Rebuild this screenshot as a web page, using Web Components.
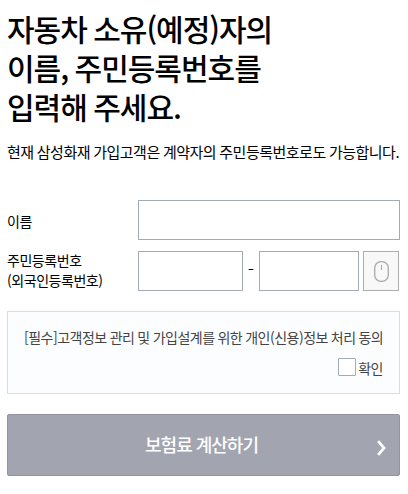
<!DOCTYPE html>
<html lang="ko">
<head>
<meta charset="utf-8">
<title>보험료 계산</title>
<style>
  body {
    margin: 0;
    background: #fff;
    color: #000;
    font-family: 'Noto Sans CJK KR', 'Noto Sans', sans-serif;
  }
</style>
</head>
<body>
<insurance-form>
  <page-title>
    자동차 소유(예정)자의<br>이름, 주민등록번호를<br>입력해 주세요.
    <span slot="note">현재 삼성화재 가입고객은 계약자의 주민등록번호로도 가능합니다.</span>
  </page-title>
  <form-row>
    <span slot="label">이름</span>
    <text-box label="이름"></text-box>
  </form-row>
  <form-row two-line>
    <span slot="label">주민등록번호<br>(외국인등록번호)</span>
    <resident-number></resident-number>
  </form-row>
  <agree-box>
    [필수]고객정보 관리 및 가입설계를 위한 개인(신용)정보 처리 동의
    <span slot="check">확인</span>
  </agree-box>
  <submit-button>보험료 계산하기</submit-button>
</insurance-form>

<script>
(() => {

  const define = (name, html) => {
    customElements.define(name, class extends HTMLElement {
      constructor() {
        super()
        this.attachShadow({ mode: 'open' }).innerHTML = html
      }
    })
  }

  define('insurance-form', `
    <style>
      :host {
        display: flex;
        flex-direction: column;
        box-sizing: border-box;
        width: 408px;
        padding: 9px 8px 18px 7px;
      }
      ::slotted(form-row) { margin-bottom: 11px; }
      ::slotted(agree-box) { margin: 9px 0 20px; }
    </style>
    <slot></slot>
  `)

  define('page-title', `
    <style>
      :host { display: block; height: 191px; white-space: nowrap; }
      h1 {
        margin: 0;
        font-size: 30px;
        font-weight: 500;
        line-height: 39px;
        letter-spacing: -1px;
        word-spacing: -1px;
      }
      p {
        margin: 15px 0 0;
        font-size: 15px;
        font-weight: 400;
        line-height: 22px;
        letter-spacing: -.5px;
        word-spacing: -.5px;
      }
    </style>
    <h1><slot></slot></h1>
    <p><slot name="note"></slot></p>
  `)

  define('form-row', `
    <style>
      :host {
        display: grid;
        grid-template: 40px / 131px 262px;
        align-items: center;
      }
      .label {
        padding-top: 2px;
        font-size: 14px;
        font-weight: 400;
        line-height: 20px;
        letter-spacing: -.45px;
      }
      :host([two-line]) .label { padding: 0 0 2px; }
    </style>
    <div class="label"><slot name="label"></slot></div>
    <slot></slot>
  `)

  class TextBox extends HTMLElement {
    constructor() {
      super()
      this.attachShadow({ mode: 'open' }).innerHTML = `
        <style>
          :host { display: block; }
          input {
            display: block;
            box-sizing: border-box;
            width: 100%;
            height: 40px;
            margin: 0;
            padding: 0 10px;
            border: 1px solid #a3abb5;
            border-radius: 0;
            background: #fff;
            font: 14px 'Noto Sans CJK KR', sans-serif;
            outline: none;
          }
        </style>
        <input>
      `
      const input = this.shadowRoot.querySelector('input')
      input.type = this.getAttribute('type') || 'text'
      input.setAttribute('aria-label', this.getAttribute('label') || '')
    }
  }
  customElements.define('text-box', TextBox)

  define('resident-number', `
    <style>
      :host {
        display: grid;
        grid-template-columns: 105px 16px 100px 36px;
      }
      .dash {
        font-size: 19px;
        font-weight: 300;
        line-height: 36px;
        text-align: center;
      }
      button {
        display: flex;
        align-items: center;
        justify-content: center;
        box-sizing: border-box;
        width: 36px;
        height: 40px;
        margin-left: 4px;
        padding: 0 0 0 1px;
        border: 1px solid #adadad;
        background: #f8f8f8;
      }
    </style>
    <text-box label="앞자리"></text-box>
    <span class="dash">-</span>
    <text-box type="password" label="뒷자리"></text-box>
    <button type="button" aria-label="마우스 입력">
      <svg width="15" height="21" viewBox="0 0 15 21" fill="none" stroke="#a9a9a9">
        <rect x=".7" y=".7" width="13.6" height="19.6" rx="6.2" stroke-width="1.3"/>
        <path d="M7.5 4v5" stroke-width="1.1"/>
      </svg>
    </button>
  `)

  define('agree-box', `
    <style>
      :host {
        display: flex;
        flex-direction: column;
        box-sizing: border-box;
        height: 83px;
        padding: 15px 16px 0;
        border: 1px solid #dadde3;
        background: #fcfdfe;
        color: #444;
        font-size: 14px;
        line-height: 21px;
        letter-spacing: -.5px;
        word-spacing: -.5px;
        white-space: nowrap;
      }
      label {
        display: flex;
        align-items: center;
        align-self: flex-end;
        gap: 2px;
        margin-top: 10px;
      }
      input {
        appearance: none;
        box-sizing: border-box;
        width: 18px;
        height: 18px;
        margin: 0 0 3px;
        border: 1px solid #a3abb5;
        border-radius: 1px;
        background: #fff;
      }
    </style>
    <div><slot></slot></div>
    <label><input type="checkbox"><slot name="check"></slot></label>
  `)

  define('submit-button', `
    <style>
      :host { display: block; }
      button {
        display: grid;
        grid-template-columns: 1fr auto 1fr;
        align-items: center;
        box-sizing: border-box;
        width: 100%;
        height: 62px;
        padding: 0 13px 0 9px;
        border: 1px solid #9394a1;
        border-radius: 2px;
        background: #a2a4af;
        color: #fff;
        font-family: inherit;
        font-size: 18px;
        font-weight: 500;
        line-height: 26px;
        letter-spacing: -1px;
      }
      .text { grid-column: 2; padding-bottom: 3px; }
      svg { justify-self: end; margin-top: 5px; }
    </style>
    <button type="button">
      <span class="text"><slot></slot></span>
      <svg width="9" height="16" viewBox="0 0 9 16" fill="none" stroke="#fff" stroke-width="2.7">
        <path d="M1.2 1.2 7 8l-5.8 6.8"/>
      </svg>
    </button>
  `)
})()
</script>
</body>
</html>
